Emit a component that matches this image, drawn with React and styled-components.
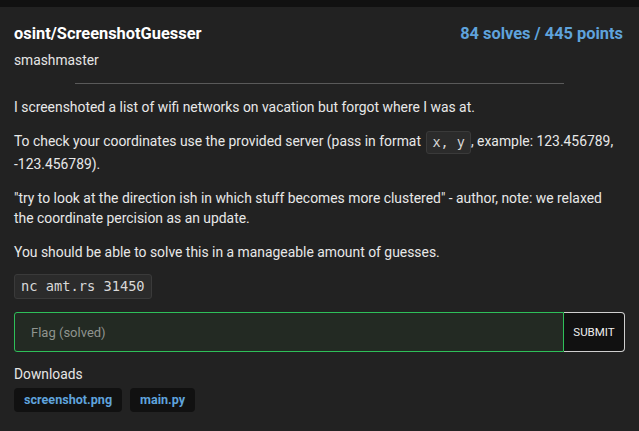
import React from "react";
import styled, { createGlobalStyle } from "styled-components";

const GlobalStyle = createGlobalStyle`
	body {
		margin: 0;
		background: #222;
		font-family: Roboto, "Liberation Sans", sans-serif;
		color: #e6e6e6;
	}
`;

const TopBar = styled.div`
	height: 7px;
	background: #111;
`;

const Card = styled.div`
	background: #222;
	padding: 17px 14px 18px;
`;

const Header = styled.div`
	display: flex;
	justify-content: space-between;
	align-items: flex-start;
`;

const Title = styled.h1`
	margin: 0;
	font-size: 16.4px;
	line-height: 20px;
	font-weight: 700;
	color: #fff;
`;

const Points = styled.div`
	font-size: 16.4px;
	line-height: 20px;
	font-weight: 700;
	color: #5fa3dc;
	margin-right: 2px;
`;

const Author = styled.div`
	font-size: 13.8px;
	line-height: 20px;
	margin-top: 6px;
	color: #e6e6e6;
`;

const Rule = styled.hr`
	width: 80%;
	border: none;
	border-top: 1px solid #5a5a5a;
	margin: 13px auto 13px;
`;

const Para = styled.p`
	font-size: 13.9px;
	line-height: 20px;
	margin: 0 6px 14px 0;
	color: #e8e8e8;
`;

const InlineCode = styled.code`
	display: inline-block;
	vertical-align: middle;
	font-family: "DejaVu Sans Mono", monospace;
	font-size: 13.5px;
	line-height: 21px;
	background: #2b2b2b;
	border: 1px solid #3a3a3a;
	border-radius: 3px;
	padding: 0 5px;
	margin-left: 2px;
	color: #d8d8d8;
`;

const CodeBlock = styled.pre`
	width: fit-content;
	margin: -2px 0 13px;
	font-family: "DejaVu Sans Mono", monospace;
	font-size: 13.7px;
	line-height: 23px;
	background: #2b2b2b;
	border: 1px solid #3a3a3a;
	border-radius: 3px;
	padding: 0 6px;
	color: #d8d8d8;
`;

const FlagRow = styled.form`
	display: flex;
	height: 40px;
`;

const FlagInput = styled.input`
	flex: 1;
	background: #232a23;
	border: 1px solid #2ebf59;
	border-radius: 3px 0 0 3px;
	padding: 0 16px;
	font-family: Roboto, "Liberation Sans", sans-serif;
	font-size: 13px;
	color: #ddd;
	outline: none;
	&::placeholder {
		color: #8f948f;
	}
`;

const SubmitButton = styled.button`
	width: 61px;
	background: #111;
	border: 1px solid #cfcfcf;
	border-left: none;
	border-radius: 0 4px 4px 0;
	font-family: Roboto, "Liberation Sans", sans-serif;
	font-size: 11.5px;
	color: #eee;
	padding: 0;
`;

const SectionLabel = styled.div`
	font-size: 13.8px;
	line-height: 20px;
	margin-top: 12px;
	color: #e6e6e6;
`;

const FileList = styled.div`
	display: flex;
	gap: 8px;
	margin-top: 4px;
`;

const FileButton = styled.a`
	display: inline-block;
	background: #111;
	border-radius: 4px;
	padding: 0 10px;
	height: 24px;
	line-height: 24px;
	font-size: 12.6px;
	font-weight: 700;
	color: #5fa3dc;
	text-decoration: none;
`;

export default function App() {
	return (
		<>
			<GlobalStyle />
			<TopBar />
			<Card>
				<Header>
					<Title>osint/ScreenshotGuesser</Title>
					<Points>84 solves / 445 points</Points>
				</Header>
				<Author>smashmaster</Author>
				<Rule />
				<Para>
					I screenshoted a list of wifi networks on vacation but forgot
					where I was at.
				</Para>
				<Para>
					To check your coordinates use the provided server (pass in format{" "}
					<InlineCode>x, y</InlineCode>, example: 123.456789,
					-123.456789).
				</Para>
				<Para>
					"try to look at the direction ish in which stuff becomes more
					clustered" - author, note: we relaxed the coordinate percision
					as an update.
				</Para>
				<Para>
					You should be able to solve this in a manageable amount of
					guesses.
				</Para>
				<CodeBlock>nc amt.rs 31450</CodeBlock>
				<FlagRow onSubmit={e => e.preventDefault()}>
					<FlagInput placeholder="Flag (solved)" />
					<SubmitButton type="submit">SUBMIT</SubmitButton>
				</FlagRow>
				<SectionLabel>Downloads</SectionLabel>
				<FileList>
					<FileButton href="#">screenshot.png</FileButton>
					<FileButton href="#">main.py</FileButton>
				</FileList>
			</Card>
		</>
	);
}
